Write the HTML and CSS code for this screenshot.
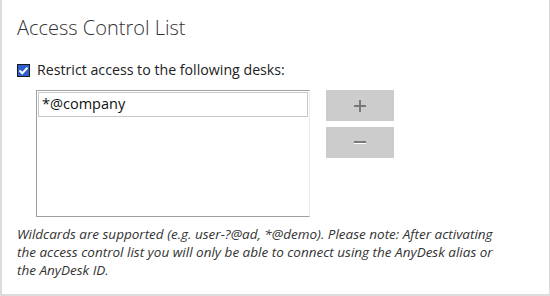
FILE: index.html
```html
<!DOCTYPE html>
<html lang="en">
<head>
  <meta charset="UTF-8" />
  <title>Access Control List</title>
  <link rel="stylesheet" href="styles.css">
</head>
<body>
  <div class="panel">
    <div class="title">Access Control List</div>

    <label class="check-row">
      <span class="checkbox">
        <svg width="11" height="11" viewBox="0 0 11 11"><path d="M1.5 5.5 L4.3 8.2 L9.5 2.6" fill="none" stroke="#fff" stroke-width="2"/></svg>
      </span>
      <span class="check-label">Restrict access to the following desks:</span>
    </label>

    <div class="list-row">
      <div class="listbox">
        <div class="list-item">*@company</div>
      </div>
      <div class="buttons">
        <div class="btn">
          <svg width="12" height="12" viewBox="0 0 12 12"><path d="M6 0 V12 M0 6 H12" stroke="#777" stroke-width="2"/></svg>
        </div>
        <div class="btn">
          <svg width="12" height="12" viewBox="0 0 12 12"><path d="M0 5 H12" stroke="#777" stroke-width="2"/><path d="M0 6.5 H12" stroke="#fff" stroke-width="1"/></svg>
        </div>
      </div>
    </div>

    <p class="note">Wildcards are supported (e.g. user-?@ad, *@demo). Please note: After activating the access control list you will only be able to connect using the AnyDesk alias or the AnyDesk ID.</p>
  </div>
</body>
</html>
```

FILE: styles.css
```css
html, body {
  margin: 0;
  padding: 0;
  background: #fff;
  font-family: 'Open Sans', 'Noto Sans', sans-serif;
  color: #333;
}

.panel {
  box-sizing: border-box;
  width: 550px;
  height: 296px;
  border: 2px solid #dcdcdc;
  border-top: none;
  border-right-width: 1px;
  padding: 14px 0 0 15px;
}

.title {
  font-size: 20px;
  font-weight: 300;
  line-height: 28px;
  color: #333;
}

.check-row {
  display: flex;
  align-items: center;
  gap: 7px;
  margin-top: 20px;
}

.checkbox {
  width: 11px;
  height: 11px;
  background: #2b5fcc;
  border: 1px solid #1a1a1a;
  display: flex;
  align-items: center;
  justify-content: center;
}

.check-label {
  font-size: 14.2px;
  line-height: 16px;
  color: #222;
}

.list-row {
  display: flex;
  gap: 16px;
  margin-top: 12px;
  padding-left: 19px;
}

.listbox {
  width: 270px;
  height: 123px;
  border: 1px solid #a0a0a0;
  border-right-color: #ececec;
  padding: 1px;
}

.list-item {
  height: 23px;
  border: 1px solid #c8c8c8;
  padding-left: 3px;
  font-size: 14.5px;
  line-height: 22px;
  color: #111;
}

.buttons {
  display: flex;
  flex-direction: column;
  gap: 6px;
}

.btn {
  width: 68px;
  height: 31px;
  background: #cccccc;
  display: flex;
  align-items: center;
  justify-content: center;
}

.note {
  margin: 8px 0 0 0;
  width: 488px;
  font-size: 13.5px;
  font-style: italic;
  line-height: 18px;
  color: #333;
}
```
